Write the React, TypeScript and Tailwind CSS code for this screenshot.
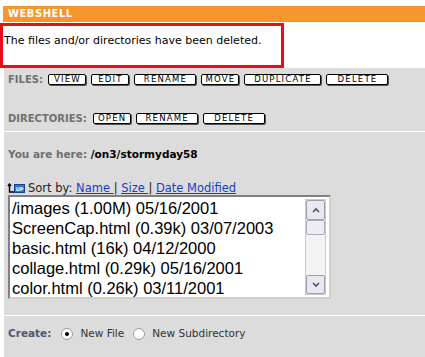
import React from "react";

const V = "font-['DejaVu_Sans',Verdana,sans-serif]";

function Btn({ label, w }: { label: string; w: number }) {
  return (
    <div
      className={`h-[11px] bg-white border border-black rounded-[2px] shadow-[1px_1px_0_#555] flex items-center justify-center text-[8.5px] leading-none tracking-[1.2px] text-black ${V}`}
      style={{ width: w }}
    >
      <span className="ml-[1px]">{label}</span>
    </div>
  );
}

export default function App() {
  const files = [
    "/images (1.00M) 05/16/2001",
    "ScreenCap.html (0.39k) 03/07/2003",
    "basic.html (16k) 04/12/2000",
    "collage.html (0.29k) 05/16/2001",
    "color.html (0.26k) 03/11/2001",
  ];
  return (
    <div className="w-[425px] h-[357px] bg-white overflow-hidden flex flex-col">
      <div className="h-[6px] shrink-0" />
      <div className={`shrink-0 ml-[3px] h-[16px] bg-[#f7962a] text-white font-bold text-[10px] leading-[16px] pl-[5px] tracking-[0.5px] ${V}`}>
        WEBSHELL
      </div>
      <div className="shrink-0 h-[46px] pt-[1px]">
        <div className={`w-[284px] h-[45px] border-[3px] border-[#e3101a] pl-[1px] pt-[8px] text-[11px] leading-[14px] text-black ${V}`}>
          The files and/or directories have been deleted.
        </div>
      </div>
      <div className={`ml-[4px] flex-1 bg-[#dcdcdc] flex flex-col ${V}`}>
        <div className="h-[11px] flex items-center gap-[5px] mt-[6px] pl-[4px]">
          <span className="text-[10px] leading-[11px] font-bold text-[#707070]">FILES:</span>
          <Btn label="VIEW" w={38} />
          <Btn label="EDIT" w={38} />
          <Btn label="RENAME" w={62} />
          <Btn label="MOVE" w={38} />
          <Btn label="DUPLICATE" w={77} />
          <Btn label="DELETE" w={62} />
        </div>
        <div className="h-[11px] flex items-center gap-[5px] mt-[28px] pl-[4px]">
          <span className="text-[10px] leading-[11px] font-bold text-[#707070] mr-[1px]">DIRECTORIES:</span>
          <Btn label="OPEN" w={38} />
          <Btn label="RENAME" w={62} />
          <Btn label="DELETE" w={62} />
        </div>
        <div className="h-[1px] bg-white mt-[7px]" />
        <div className="h-[12px] mt-[16px] pl-[4px] text-[10.5px] leading-[12px] font-bold">
          <span className="text-[#707070]">You are here: </span>
          <span className="text-black">/on3/stormyday58</span>
        </div>
        <div className="h-[12px] mt-[22px] pl-[2px] flex items-center text-[11.5px] leading-[12px] text-[#222]">
          <svg width="20" height="11" viewBox="0 0 20 11" className="mr-[2px]">
            <path d="M2 3 L3.5 1 L5 3 M3.5 1 V9 H8" stroke="#000" strokeWidth="1.4" fill="none" />
            <rect x="8.5" y="1.5" width="10" height="8" fill="#3b6fd0" stroke="#1a3f8f" />
            <text x="13.5" y="8" fontSize="5" fill="#fff" textAnchor="middle" fontFamily="DejaVu Sans" fontWeight="bold">UP</text>
          </svg>
          <span>Sort by:&nbsp;</span>
          <a className="text-[#1a3cc8] underline">Name&nbsp;</a>
          <span>|&nbsp;</span>
          <a className="text-[#1a3cc8] underline">Size&nbsp;</a>
          <span>|&nbsp;</span>
          <a className="text-[#1a3cc8] underline">Date Modified</a>
        </div>
        <div className="mt-[1px] ml-[4px] w-[323px] h-[104px] bg-white border-2 border-t-[#808080] border-l-[#808080] border-r-[#d4d0c8] border-b-[#d4d0c8] flex">
          <div className="flex-1 pl-[2px] pt-[1px] font-['Liberation_Sans',Arial,sans-serif] text-[16.5px] leading-[20px] text-black overflow-hidden">
            {files.map((f) => (
              <div key={f} className="whitespace-nowrap">{f}</div>
            ))}
          </div>
          <div className="w-[21px] my-[2px] mr-[3px] bg-[#f3f3f6] border border-[#c8c8d0] flex flex-col justify-between">
            <div className="flex flex-col">
              <div className="h-[20px] bg-[#e8e8ee] border border-[#9aa0b0] rounded-[2px] flex items-center justify-center">
                <svg width="8" height="6" viewBox="0 0 8 6"><path d="M1 5 L4 2 L7 5" stroke="#4a5068" strokeWidth="1.6" fill="none" /></svg>
              </div>
              <div className="h-[15px] bg-[#ececf2] border border-[#a8aec0] rounded-[2px]" />
            </div>
            <div className="h-[19px] bg-[#e8e8ee] border border-[#9aa0b0] rounded-[2px] flex items-center justify-center">
              <svg width="8" height="6" viewBox="0 0 8 6"><path d="M1 1 L4 4 L7 1" stroke="#4a5068" strokeWidth="1.6" fill="none" /></svg>
            </div>
          </div>
        </div>
        <div className="h-[1px] bg-white mt-[16px]" />
        <div className="h-[13px] mt-[11px] pl-[4px] flex items-center text-[10.5px] leading-[13px] text-[#333]">
          <span className="font-bold text-[#4c5870] mr-[10px]">Create:</span>
          <span className="w-[12px] h-[12px] rounded-full bg-white border border-[#9a9a9a] flex items-center justify-center mr-[7px]">
            <span className="w-[4px] h-[4px] rounded-full bg-black" />
          </span>
          <span className="mr-[9px]">New File</span>
          <span className="w-[12px] h-[12px] rounded-full bg-white border border-[#9a9a9a] mr-[7px]" />
          <span>New Subdirectory</span>
        </div>
      </div>
    </div>
  );
}
